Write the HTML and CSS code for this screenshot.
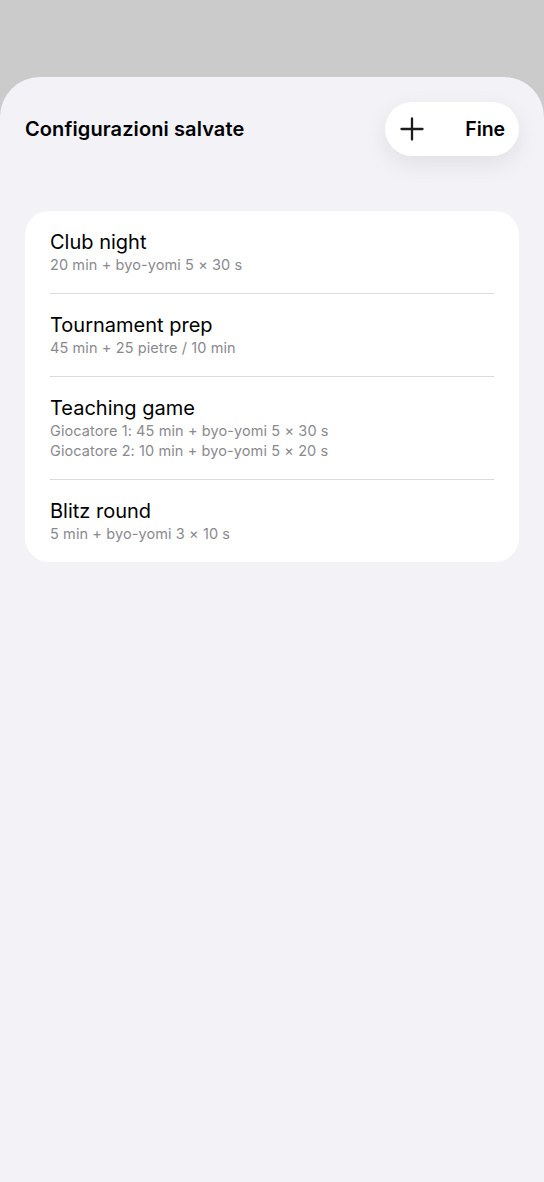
FILE: index.html
```html
<!DOCTYPE html>
<html lang="it">
<head>
    <meta charset="UTF-8">
    <meta name="viewport" content="width=device-width, initial-scale=1.0">
    <title>Configurazioni salvate</title>
    <link rel="stylesheet" href="styles.css">
</head>
<body>
    <div class="sheet">
        <div class="sheet_head">
            <h1 class="sheet_title">Configurazioni salvate</h1>
            <div class="head_btns">
                <a href="#" class="add_btn">
                    <svg width="24" height="24" viewBox="0 0 24 24"><path d="M12 1.5v21M1.5 12h21" stroke="#1c1c1e" stroke-width="2.3" stroke-linecap="round" fill="none"/></svg>
                </a>
                <a href="#" class="done_btn">Fine</a>
            </div>
        </div>
        <ul class="preset_list">
            <li>
                <div class="name">Club night</div>
                <div class="desc">20 min + byo-yomi 5 × 30 s</div>
            </li>
            <li>
                <div class="name">Tournament prep</div>
                <div class="desc">45 min + 25 pietre / 10 min</div>
            </li>
            <li>
                <div class="name">Teaching game</div>
                <div class="desc">Giocatore 1: 45 min + byo-yomi 5 × 30 s</div>
                <div class="desc">Giocatore 2: 10 min + byo-yomi 5 × 20 s</div>
            </li>
            <li>
                <div class="name">Blitz round</div>
                <div class="desc">5 min + byo-yomi 3 × 10 s</div>
            </li>
        </ul>
    </div>
</body>
</html>
```

FILE: styles.css
```css
*{margin:0; padding:0; box-sizing:border-box;}
li{list-style:none;}
a{text-decoration:none; color:#000;}
html,body{height:100%;}
body{background:#cbcbcb; font-family:Inter, "Noto Sans", sans-serif; color:#000; padding-top:77px;}
.sheet{background:#f2f2f7; border-radius:40px 40px 0 0; min-height:100%; padding:25px 25px 0 25px;}
.sheet_head{display:flex; align-items:center; justify-content:space-between; height:54px;}
.sheet_title{font-size:20px; font-weight:600; letter-spacing:0.1px;}
.head_btns{display:flex; align-items:center; height:54px; width:134px; padding:0 14px 0 15px; background:#fff; border-radius:27px; box-shadow:0 8px 24px rgba(0,0,0,0.08);}
.add_btn{display:flex; width:24px; height:24px;}
.done_btn{margin-left:auto; font-size:19.5px; font-weight:600; letter-spacing:-0.1px;}
.preset_list{margin-top:55px; background:#fff; border-radius:24px; padding:0 25px;}
.preset_list li{padding:19px 0 18px 0; border-bottom:1px solid #dcdcdf;}
.preset_list li:last-child{border-bottom:0 none;}
.preset_list .name{font-size:20px; line-height:24px; letter-spacing:0;}
.preset_list .desc{font-size:14.5px; line-height:20px; color:#8a8a8e; letter-spacing:0.1px;}
.preset_list .name + .desc{margin-top:1px;}
```
